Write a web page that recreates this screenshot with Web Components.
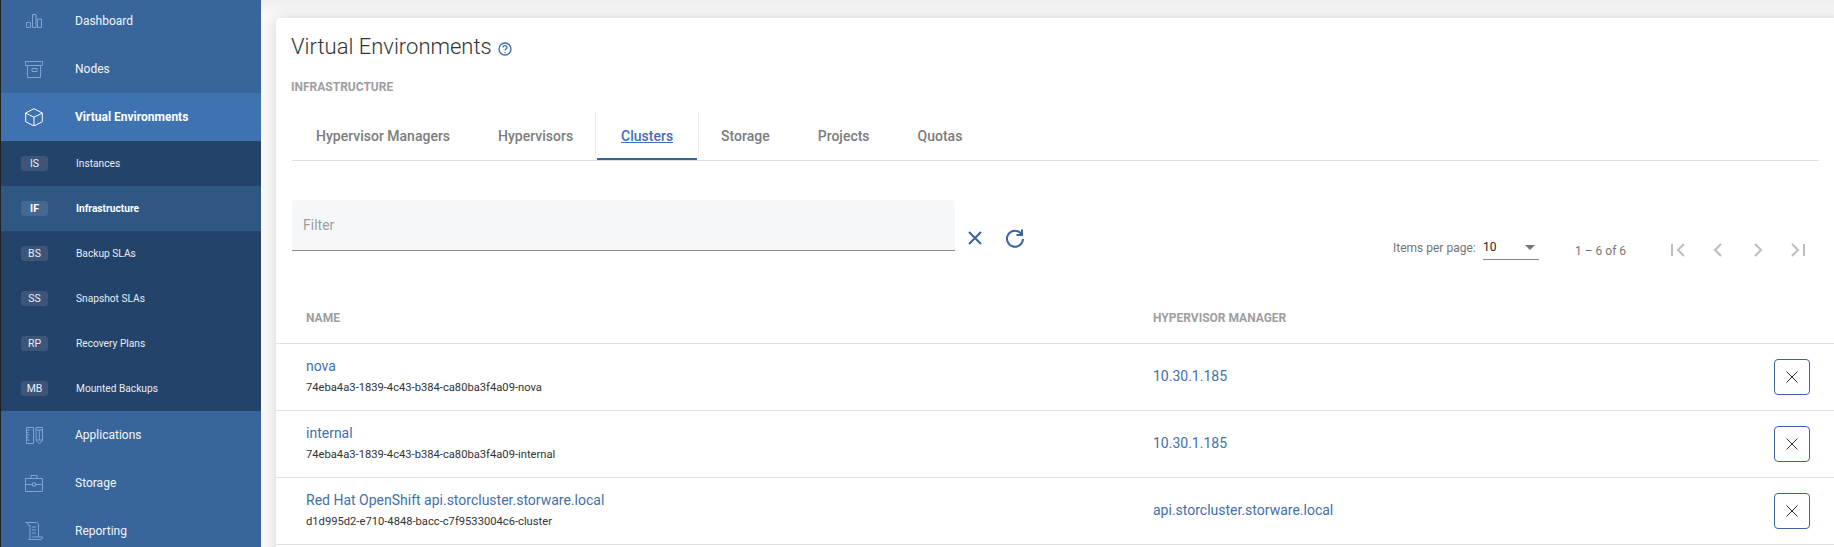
<!DOCTYPE html>
<html><head><meta charset="utf-8"><title>Virtual Environments</title>
<style>
html,body{margin:0;padding:0;height:547px;overflow:hidden;background:#fafafa;font-family:Roboto,"Liberation Sans",sans-serif}
</style></head><body>
<app-shell>
  <side-nav slot="nav">
    <nav-item icon="dashboard">Dashboard</nav-item>
    <nav-item icon="nodes">Nodes</nav-item>
    <nav-item icon="cube" active>Virtual Environments</nav-item>
    <nav-sub badge="IS">Instances</nav-sub>
    <nav-sub badge="IF" active>Infrastructure</nav-sub>
    <nav-sub badge="BS">Backup SLAs</nav-sub>
    <nav-sub badge="SS">Snapshot SLAs</nav-sub>
    <nav-sub badge="RP">Recovery Plans</nav-sub>
    <nav-sub badge="MB">Mounted Backups</nav-sub>
    <nav-item icon="apps">Applications</nav-item>
    <nav-item icon="storage">Storage</nav-item>
    <nav-item icon="reporting">Reporting</nav-item>
  </side-nav>
  <page-card heading="Virtual Environments" section="INFRASTRUCTURE">
    <tab-bar>
      <tab-link>Hypervisor Managers</tab-link>
      <tab-link>Hypervisors</tab-link>
      <tab-link active>Clusters</tab-link>
      <tab-link>Storage</tab-link>
      <tab-link>Projects</tab-link>
      <tab-link>Quotas</tab-link>
    </tab-bar>
    <table-toolbar></table-toolbar>
    <table-head></table-head>
    <data-row name="nova" uid="74eba4a3-1839-4c43-b384-ca80ba3f4a09-nova" manager="10.30.1.185"></data-row>
    <data-row name="internal" uid="74eba4a3-1839-4c43-b384-ca80ba3f4a09-internal" manager="10.30.1.185"></data-row>
    <data-row name="Red Hat OpenShift api.storcluster.storware.local" uid="d1d995d2-e710-4848-bacc-c7f9533004c6-cluster" manager="api.storcluster.storware.local"></data-row>
  </page-card>
</app-shell>
<script>
const ICONS={
dashboard:'<path d="M1.500 10.500h4v5h-4zM7.500 2.500h3.500v13H7.500zM12.500 7h4v8.500h-4z"/>',
nodes:'<path d="M.5 1.500h17v4H.5zM2.500 5.500v12h13v-12M7 8.500h5v3H7z"/>',
cube:'<path d="M9 .7 17.300 5v8.700L9 18 .7 13.700V5zM.7 5 9 9.300 17.300 5M9 9.300V18"/>',
apps:'<path d="M1.500 1.500H8.500v16H1.500zM1.500 4h3M1.500 6.500h2M1.500 9h3M1.500 11.500h2M1.500 14h3M11 1.500h6.500V14.500l-3.250 3-3.250-3zM11 4h6.500M11 14h6.500M14.250 4v10"/>',
storage:'<path d="M.5 4.500h17v13H.5zM6 4.500V1.500h6v3M.5 10.500h6.500M11 10.500h6.500M7.500 9h3v3h-3z"/>',
reporting:'<path d="M.5 .5h11c1.500 0 2 1 2 2.500v12M.5 .5c2 0 3 1 3 3h1.500V15c0 2-.5 2.500-1.500 2.500H16c1 0 1.500-1 1.500-2.500H7M7 5h4M7 8h4M7 11h4"/>'
};
function def(name,css,html){
  customElements.define(name,class extends HTMLElement{
    connectedCallback(){
      if(this.shadowRoot)return;
      const s=this.attachShadow({mode:'open'});
      const g=k=>this.getAttribute(k)||'';
      s.innerHTML='<style>'+css+'</style>'+(typeof html==='function'?html(g):html);
    }
  });
}
def('app-shell',`:host{display:flex;width:1834px;height:547px;overflow:hidden;background:linear-gradient(#eee,#fafafa 14px)}
.main{flex:1;min-width:0;padding:18px 0 0 15px}`,`<slot name="nav"></slot><div class="main"><slot></slot></div>`);
def('side-nav',`:host{display:block;flex:none;width:261px;box-sizing:border-box;height:547px;overflow:hidden;background:#38669c;border-left:1px solid #222}
.in{margin-top:-3px}`,`<div class="in"><slot></slot></div>`);
def('nav-item',`:host{display:flex;align-items:center;height:48px;color:#f1f5fa;font:400 12px/16px Roboto,sans-serif;background:#38669c}
:host([active]){background:#3f72b0;font-weight:700;color:#fff}
svg{flex:none;width:18px;height:18px;margin:0 32px 0 24px;fill:none;stroke:#7ea5d2;stroke-width:1}
:host([active]) svg{stroke:#fff}`,g=>`<svg viewBox="0 0 18 18">${ICONS[g('icon')]}</svg><slot></slot>`);
def('nav-sub',`:host{display:flex;align-items:center;height:45px;color:#e6edf5;font:400 10.200px/14px Roboto,sans-serif;background:#24436a}
:host([active]){background:#2f5784;font-weight:700;color:#fff}
b{flex:none;box-sizing:border-box;width:27px;height:15px;margin:0 28px 0 20px;border-radius:3px;background:#3c5578;font:400 10.500px/15px Roboto,sans-serif;text-align:center;color:#e6edf5}
:host([active]) b{background:#466890;font-weight:700;color:#fff}`,g=>`<b>${g('badge')}</b><slot></slot>`);
def('page-card',`:host{display:block;height:560px;margin-right:-10px;background:#fff;border-radius:4px;box-shadow:0 0 16px rgba(0,0,0,.16)}
header{padding:13px 0 0 15px}
h1{margin:0;display:flex;align-items:center;gap:6px;font:300 22px/32px Roboto,sans-serif;color:#333;height:32px}
h1 svg{width:14px;height:14px;margin-top:3px;fill:none;stroke:#3a6ca8;stroke-width:1.300}
h2{margin:16px 0 0;font:700 12px/16px Roboto,sans-serif;color:#9e9e9e}`,g=>`<header><h1>${g('heading')}<svg viewBox="0 0 14 14"><circle cx="7" cy="7" r="6"/><path d="M5 5.500C5 3 9 3 9 5.500 9 7 7 7 7 8.500M7 10v1"/></svg></h1><h2>${g('section')}</h2></header><slot></slot>`);
def('tab-bar',`:host{display:flex;height:48px;margin:17px 25px 0 16px;border-bottom:1px solid #e0e0e0}`,`<slot></slot>`);
def('tab-link',`:host{display:flex;align-items:center;padding:0 24px;font:500 14px/20px Roboto,sans-serif;color:#7c7c7c;height:48px;box-sizing:border-box}
:host([active]){color:#3f70ad;text-decoration:underline;border-bottom:2px solid #38669c;padding-top:2px;box-shadow:-1px 0 #fff,-2px 0 #eee,1px 0 #fff,2px 0 #eee}`,`<slot></slot>`);
def('table-toolbar',`:host{display:flex;height:130px;padding:39px 0 0 16px;box-sizing:border-box;align-items:flex-start}
.f{width:663px;height:51px;box-sizing:border-box;padding:0 11px;border-radius:4px 4px 0 0;background:#f4f8fb;border-bottom:1px solid #8a8a8a;font:400 14px/50px Roboto,sans-serif;color:#9e9e9e}
.ic{display:flex;gap:16px;margin:26px 0 0 8px}
.ic svg{width:24px;height:24px;fill:none;stroke:#38669c;stroke-width:2}
.p{display:flex;align-items:flex-start;margin:36px 10px 0 auto;color:#757575;font:400 12px/16px Roboto,sans-serif;width:441px}
.l{width:90px;margin-top:4px}
.s{width:56px;height:24px;box-sizing:border-box;border-bottom:1px solid #8a8a8a;color:#212121;display:flex;justify-content:space-between;padding-top:3px}
.s i{width:0;height:0;margin:6px 4px 0 0;border:5px solid transparent;border-top-color:#757575;border-bottom:0}
.r{margin:7px 0 0 36px;width:91px}
.n{display:flex;gap:16px}
.n svg{width:24px;height:24px;margin-top:2px;fill:none;stroke:#bdbdbd;stroke-width:2}`,
`<div class="f">Filter</div><div class="ic"><svg viewBox="0 0 24 24"><path d="M6 6l12 12M18 6 6 18"/></svg><svg viewBox="0 0 24 24"><path d="M18.500 8A8 8 0 1 0 20 13M19 3.500V9h-5.500"/></svg></div>
<div class="p"><span class="l">Items per page:</span><span class="s">10<i></i></span><span class="r">1 – 6 of 6</span><span class="n">
<svg viewBox="0 0 24 24"><path d="M6 6v12M18 6l-6 6 6 6"/></svg><svg viewBox="0 0 24 24"><path d="M15 6l-6 6 6 6"/></svg><svg viewBox="0 0 24 24"><path d="M9 6l6 6-6 6"/></svg><svg viewBox="0 0 24 24"><path d="M18 6v12M6 6l6 6-6 6"/></svg></span></div>`);
def('table-head',`:host{display:grid;grid-template-columns:847px 1fr;height:53px;box-sizing:border-box;padding:2px 0 0 30px;align-items:center;border-bottom:1px solid #e0e0e6;font:700 12px/16px Roboto,sans-serif;color:#9e9e9e}`,`<span>NAME</span><span>HYPERVISOR MANAGER</span>`);
def('data-row',`:host{display:grid;grid-template-columns:847px 1fr 70px;height:67px;box-sizing:border-box;padding:0 0 0 30px;align-items:center;border-bottom:1px solid #e0e0e0;font:400 14px/20px Roboto,sans-serif;color:#3f70ad}
.t{padding-bottom:3px}
.m{padding-bottom:2px}
small{display:block;margin-top:5px;font:400 11.200px/14px Roboto,sans-serif;color:#333}
.b{box-sizing:border-box;width:36px;height:36px;border:1px solid #38669c;border-radius:4px;display:flex;align-items:center;justify-content:center;justify-self:start}
.b svg{width:12px;height:12px;fill:none;stroke:#333;stroke-width:1}`,g=>`<div class="t">${g('name')}<small>${g('uid')}</small></div><div class="m">${g('manager')}</div><div class="b"><svg viewBox="0 0 12 12"><path d="M.5.5l11 11M11.500.5l-11 11"/></svg></div>`);
</script>
</body></html>
